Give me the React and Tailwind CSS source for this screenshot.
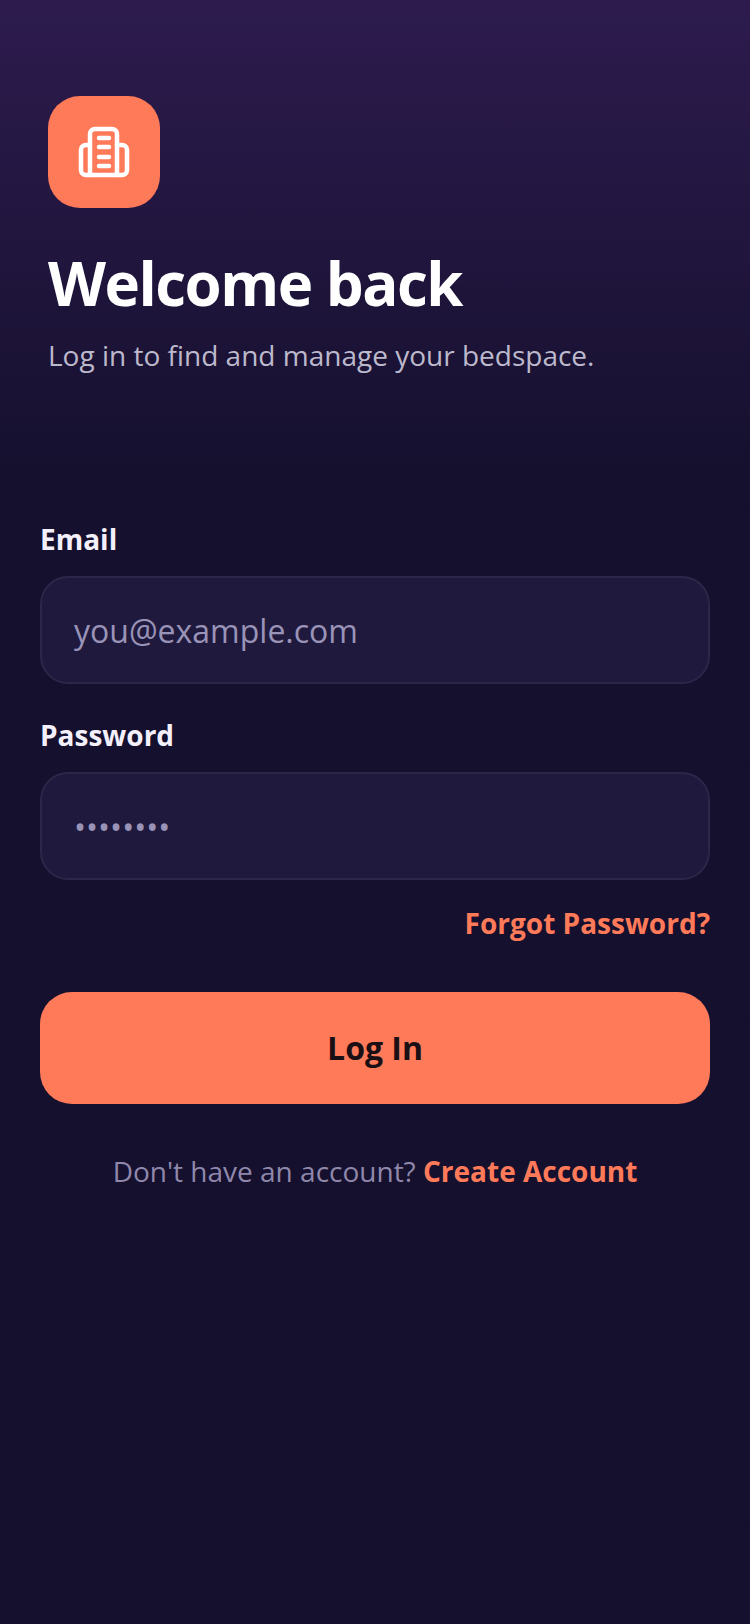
const inputClass =
  "mt-[18px] block h-[108px] w-full rounded-[28px] border-2 border-[#2c2648] bg-[#1f1a3d] px-[32px] text-[32px] text-white outline-none placeholder:text-[#9a93b8]";

function BuildingIcon() {
  return (
    <svg width="56" height="56" viewBox="0 0 56 56" fill="none" stroke="white" strokeWidth="4.5" strokeLinecap="round" strokeLinejoin="round">
      <path d="M14 51V10a5 5 0 0 1 5-5h17a5 5 0 0 1 5 5v41" />
      <path d="M14 21h-4a5 5 0 0 0-5 5v20a5 5 0 0 0 5 5h36a5 5 0 0 0 5-5V26a5 5 0 0 0-5-5h-5" />
      <path d="M23 14h10M23 23h10M23 33h10M23 42h10" />
    </svg>
  );
}

export default function App() {
  return (
    <div className="min-h-[1624px] bg-[#15102e] bg-gradient-to-b from-[#2d1b4e] to-[#15102e] to-[30%] px-10 font-['Open_Sans',sans-serif]">
      <div className="pt-24 pl-2">
        <div className="flex h-28 w-28 items-center justify-center rounded-[32px] bg-[#ff7a59]">
          <BuildingIcon />
        </div>
        <h1 className="mt-[37px] text-[60px] leading-[76px] font-bold tracking-[-1.5px] text-white">Welcome back</h1>
        <p className="mt-[12px] text-[28px] leading-[44px] text-[#bdb9cc]">Log in to find and manage your bedspace.</p>
      </div>

      <form className="mt-[143px]">
        <label className="block text-[28px] leading-[38px] font-bold text-[#f3f0fb]">Email</label>
        <input placeholder="you@example.com" className={inputClass} />

        <label className="mt-[32px] block text-[28px] leading-[38px] font-bold text-[#f3f0fb]">Password</label>
        <input placeholder="••••••••" className={inputClass} />

        <div className="mt-[24px] text-right">
          <a className="text-[28px] leading-[38px] font-bold text-[#ff7a59]">Forgot Password?</a>
        </div>

        <button type="button" className="mt-[50px] block h-28 w-full rounded-[32px] bg-[#ff7a59] text-[32px] font-bold text-[#1a0f14]">
          Log In
        </button>

        <p className="mt-[48px] text-center text-[28px] leading-[38px] text-[#8f88ab]">
          Don't have an account? <a className="font-bold text-[#ff7a59]">Create Account</a>
        </p>
      </form>
    </div>
  );
}
